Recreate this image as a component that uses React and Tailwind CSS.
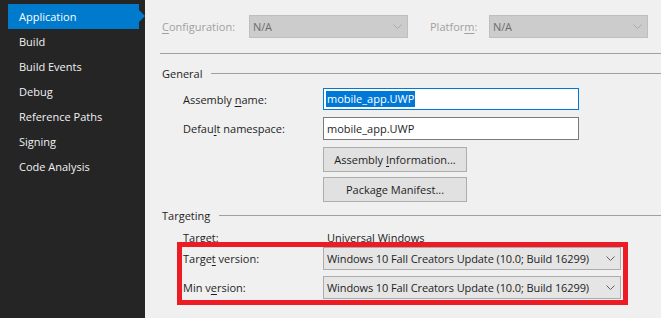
import React from "react";

const navItems = [
  "Application",
  "Build",
  "Build Events",
  "Debug",
  "Reference Paths",
  "Signing",
  "Code Analysis",
];

const Chevron = ({ color = "#606060" }) => (
  <svg width="9" height="5" viewBox="0 0 9 5" className="shrink-0">
    <polyline points="0.5,0.5 4.5,4.5 8.5,0.5" fill="none" stroke={color} strokeWidth="1" />
  </svg>
);

const Key = ({ children }) => (
  <span className="underline underline-offset-[2px] decoration-[1px]">{children}</span>
);

const Combo = ({ text, disabled, width }) => (
  <div
    className={
      "h-[23px] flex items-center justify-between pl-[3px] pr-[5px] border " +
      (disabled
        ? "bg-[#cccccc] border-[#bfbfbf] text-[#6d6d6d]"
        : "bg-[#e5e5e5] border-[#acacac] text-[#1e1e1e]")
    }
    style={{ width }}
  >
    <span className="whitespace-nowrap tracking-[-0.1px]">{text}</span>
    <Chevron color={disabled ? "#a8a8a8" : "#606060"} />
  </div>
);

const Row = ({ label, children, className = "" }) => (
  <div className={"flex items-center " + className}>
    <div className="w-[163px] shrink-0 pl-[23px]">{label}</div>
    {children}
  </div>
);

const Header = ({ title, className = "" }) => (
  <div className={"flex items-center h-[16px] pl-[2px] text-[#1e1e1e] " + className}>
    <span>{title}</span>
    <div className="flex-1 h-px bg-[#a0a0a0] ml-[9px]" />
  </div>
);

const Button = ({ children, className = "" }) => (
  <div
    className={
      "w-[144px] h-[25px] border border-[#adadad] bg-[#e1e1e1] flex items-center justify-center " +
      className
    }
  >
    <span className="whitespace-nowrap">{children}</span>
  </div>
);

export default function App() {
  return (
    <div
      className="flex w-[661px] h-[318px] overflow-hidden text-[11px] leading-none"
      style={{ fontFamily: '"Open Sans", "Noto Sans", sans-serif' }}
    >
      {/* sidebar */}
      <div className="w-[145px] shrink-0 bg-[#252526] pt-[4px] text-[#f1f1f1]">
        {navItems.map((item, i) => (
          <div
            key={item}
            className={
              "relative mx-[8px] w-[131px] h-[25px] flex items-center pl-[11px] " +
              (i === 0 ? "bg-[#007acc] text-white" : "")
            }
          >
            {item}
            {i === 0 && (
              <svg
                width="6"
                height="12"
                viewBox="0 0 6 12"
                className="absolute -right-[6px] top-[6px]"
              >
                <polygon points="0,0 6,6 0,12" fill="#007acc" />
              </svg>
            )}
          </div>
        ))}
      </div>

      {/* main */}
      <div className="flex-1 bg-[#f0f0f0] pl-[15px] text-[#1e1e1e]">
        <div className="flex items-center mt-[15px] text-[#a0a0a0]">
          <div className="w-[89px] pl-[2px]">
            <Key>C</Key>onfiguration:
          </div>
          <Combo text="N/A" disabled width={159} />
          <div className="w-[59px] ml-[22px]">
            Platfor<Key>m</Key>:
          </div>
          <Combo text="N/A" disabled width={159} />
        </div>

        <div className="h-px bg-[#a0a0a0] mt-[15px]" />

        <Header title="General" className="mt-[11px]" />

        <Row label={<>Assembly <Key>n</Key>ame:</>} className="mt-[7px]">
          <div className="w-[256px] h-[22px] border border-[#0078d7] bg-white flex items-center pl-[2px]">
            <span className="bg-[#0078d7] text-white px-[1px] leading-[16px]">mobile_app.UWP</span>
          </div>
        </Row>

        <Row label={<>Defau<Key>l</Key>t namespace:</>} className="mt-[7px]">
          <div className="w-[256px] h-[23px] border border-[#7a7a7a] bg-white flex items-center pl-[3px]">
            mobile_app.UWP
          </div>
        </Row>

        <Row label="" className="mt-[7px]">
          <Button>
            Assembly <Key>I</Key>nformation...
          </Button>
        </Row>

        <Row label="" className="mt-[5px]">
          <Button>Package Manifest...</Button>
        </Row>

        <Header title="Targeting" className="mt-[5px]" />

        <Row label="Target:" className="mt-[8px] h-[12px]">
          <div className="pl-[4px]">Universal Windows</div>
        </Row>

        <div className="relative mt-[4px]">
          <Row label={<>Targe<Key>t</Key> version:</>}>
            <Combo text="Windows 10 Fall Creators Update (10.0; Build 16299)" width={298} />
          </Row>
          <Row label={<>Min v<Key>e</Key>rsion:</>} className="mt-[6px]">
            <Combo text="Windows 10 Fall Creators Update (10.0; Build 16299)" width={298} />
          </Row>
          <div className="absolute left-[17px] top-[-5px] w-[451px] h-[63px] border-[5px] border-[#ed1c24] pointer-events-none" />
        </div>
      </div>
    </div>
  );
}
